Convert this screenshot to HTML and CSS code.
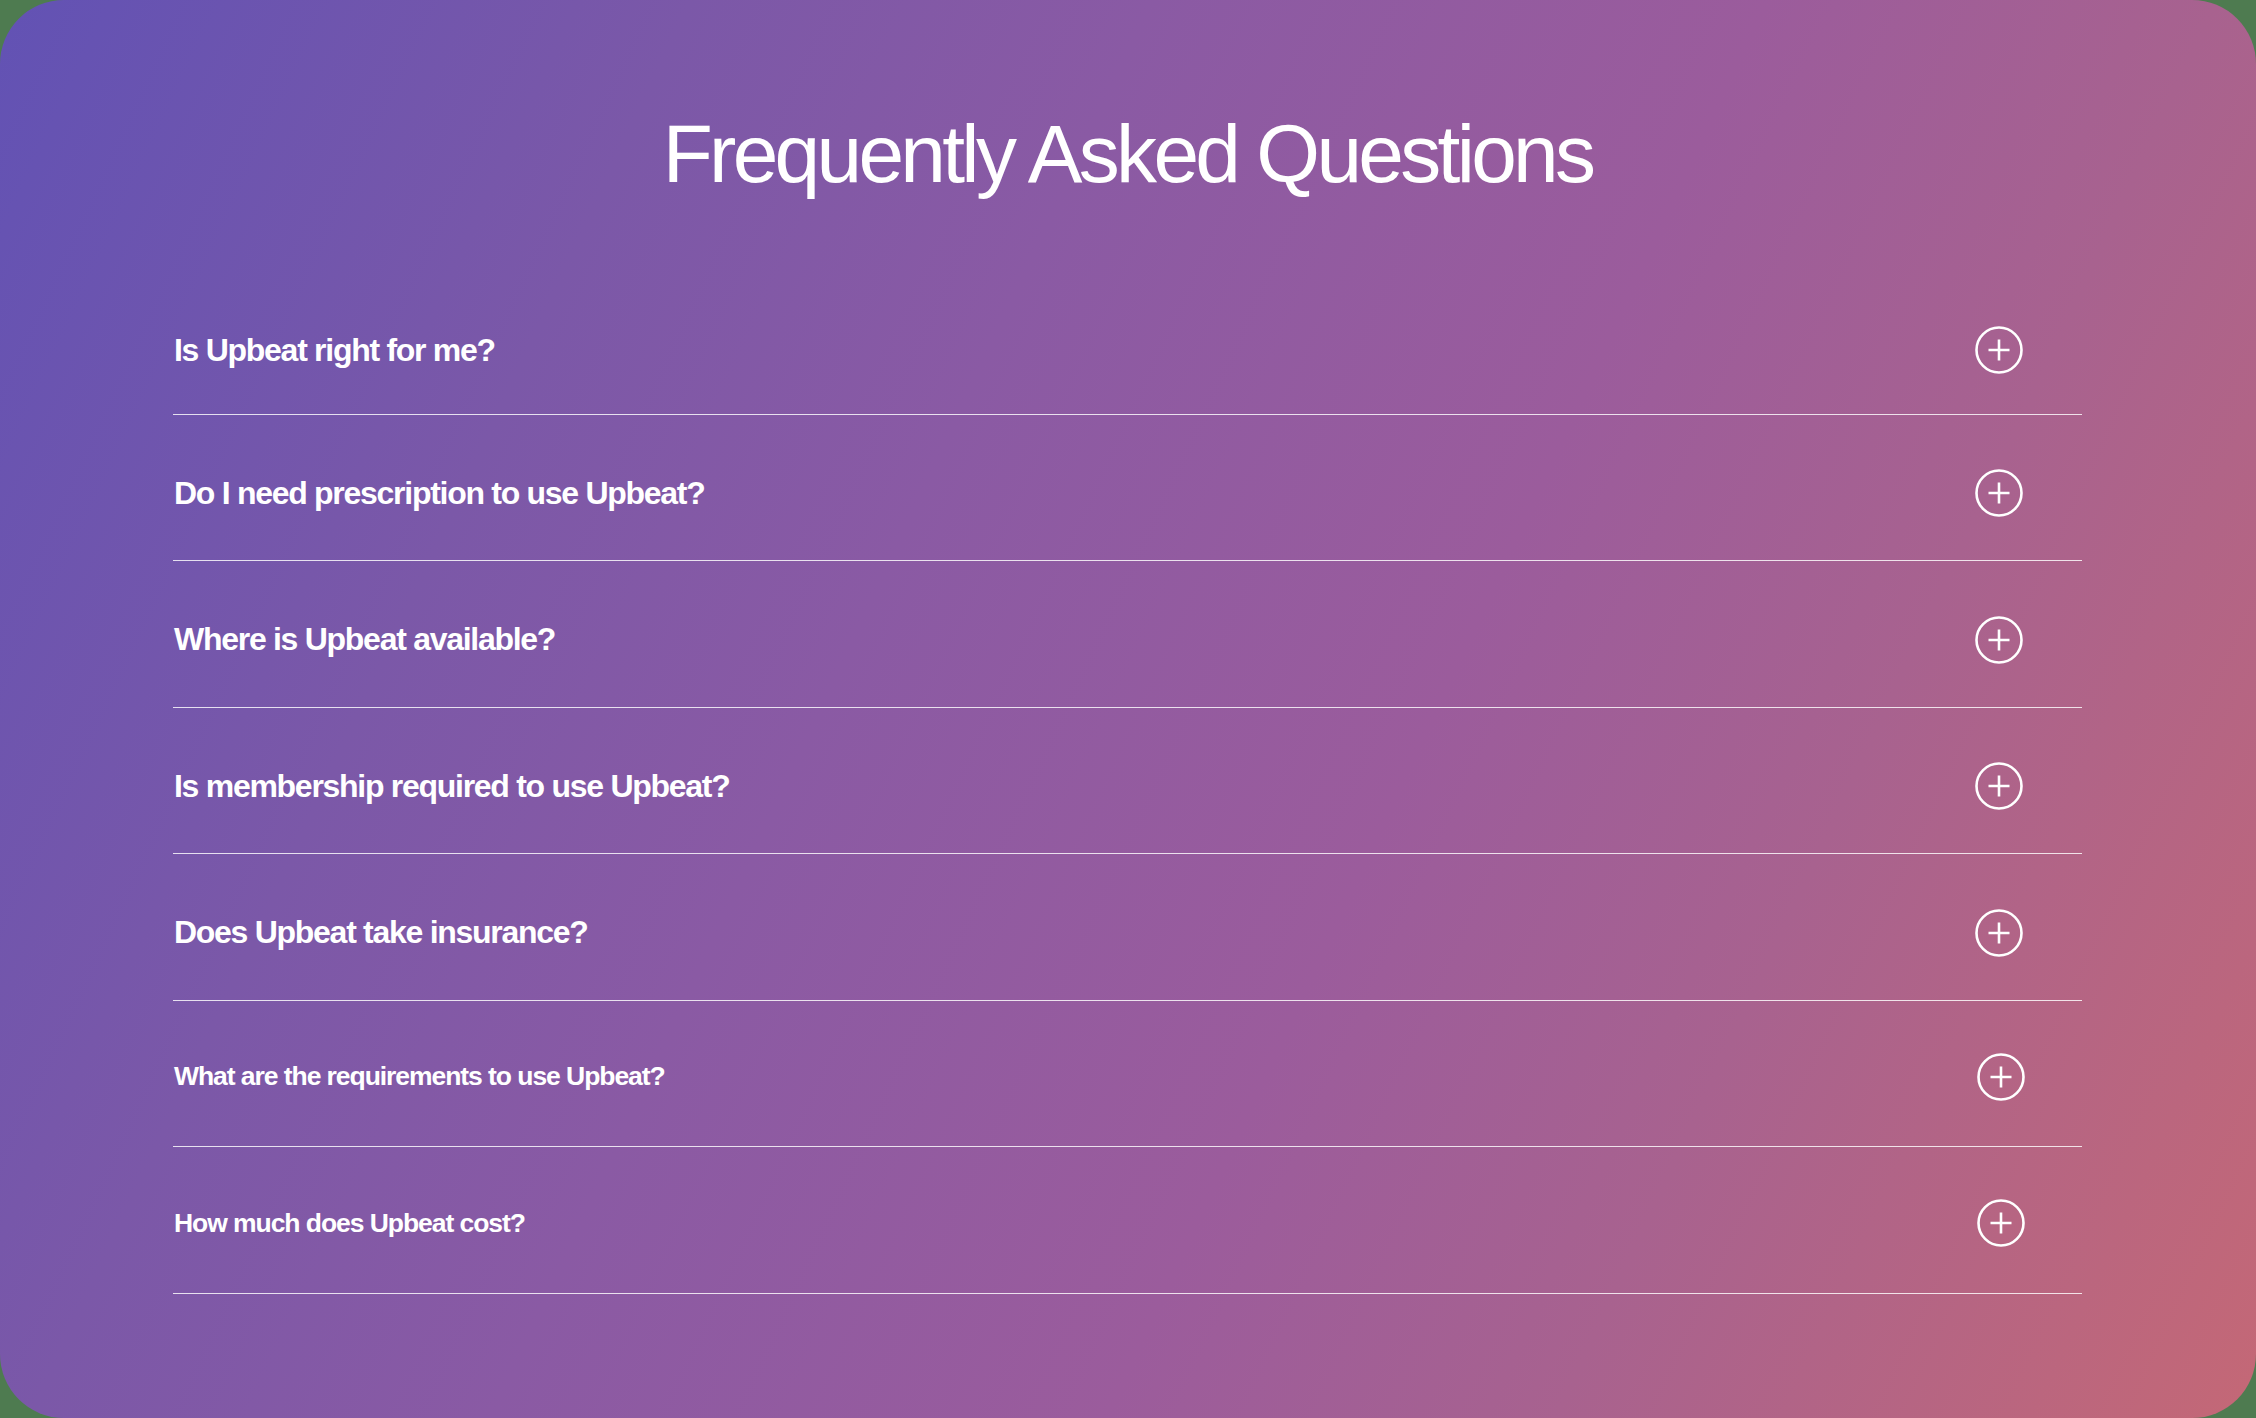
FILE: index.html
```html
<!DOCTYPE html>
<html lang="en">
<head>
<meta charset="utf-8">
<title>Frequently Asked Questions</title>
<link rel="stylesheet" href="styles.css">
</head>
<body>
<section class="faq">
  <h1 class="faq-title">Frequently Asked Questions</h1>
  <ul class="faq-list">
    <li class="faq-item faq-item--first"><span class="q q-lg">Is Upbeat right for me?</span><svg class="plus" viewBox="0 0 48 48"><circle cx="24" cy="24" r="22.5"/><path d="M24 13.5v21M13.5 24h21"/></svg></li>
    <li class="faq-item"><span class="q q-lg">Do I need prescription to use Upbeat?</span><svg class="plus" viewBox="0 0 48 48"><circle cx="24" cy="24" r="22.5"/><path d="M24 13.5v21M13.5 24h21"/></svg></li>
    <li class="faq-item"><span class="q q-lg">Where is Upbeat available?</span><svg class="plus" viewBox="0 0 48 48"><circle cx="24" cy="24" r="22.5"/><path d="M24 13.5v21M13.5 24h21"/></svg></li>
    <li class="faq-item"><span class="q q-lg">Is membership required to use Upbeat?</span><svg class="plus" viewBox="0 0 48 48"><circle cx="24" cy="24" r="22.5"/><path d="M24 13.5v21M13.5 24h21"/></svg></li>
    <li class="faq-item"><span class="q q-lg">Does Upbeat take insurance?</span><svg class="plus" viewBox="0 0 48 48"><circle cx="24" cy="24" r="22.5"/><path d="M24 13.5v21M13.5 24h21"/></svg></li>
    <li class="faq-item faq-item--sm"><span class="q q-sm">What are the requirements to use Upbeat?</span><svg class="plus" viewBox="0 0 48 48"><circle cx="24" cy="24" r="22.5"/><path d="M24 13.5v21M13.5 24h21"/></svg></li>
    <li class="faq-item faq-item--sm"><span class="q q-sm">How much does Upbeat cost?</span><svg class="plus" viewBox="0 0 48 48"><circle cx="24" cy="24" r="22.5"/><path d="M24 13.5v21M13.5 24h21"/></svg></li>
  </ul>
</section>
</body>
</html>
```
FILE: styles.css
```css
html, body {
  margin: 0;
  padding: 0;
  background: #4e7b50;
}
.faq {
  box-sizing: border-box;
  width: 100%;
  height: 1418px;
  border-radius: 64px;
  background: linear-gradient(115deg, #6252b4 0%, #7b58a8 23.7%, #8a5aa4 39.5%, #9b5c9c 60.6%, #a8628f 76%, #c46876 100%);
  padding: 113px 174px 0 173px;
  font-family: "Liberation Sans", Arial, sans-serif;
  color: #fff;
  overflow: hidden;
}
.faq-title {
  margin: 0;
  text-align: center;
  font-size: 82px;
  line-height: 82px;
  font-weight: 400;
  letter-spacing: -0.045em;
}
.faq-list {
  list-style: none;
  margin: 73px 0 0;
  padding: 0;
}
.faq-item {
  box-sizing: border-box;
  height: 146.5px;
  padding: 12px 59px 0 1px;
  display: flex;
  align-items: center;
  justify-content: space-between;
  border-bottom: 1px solid rgba(255, 255, 255, 0.82);
}
.faq-item--first {
  padding-top: 19px;
}
.faq-item--sm {
  padding-top: 7px;
  padding-right: 57px;
}
.q {
  font-weight: 700;
  letter-spacing: -0.04em;
}
.q-lg {
  font-size: 32px;
}
.q-sm {
  font-size: 26.5px;
}
.plus {
  width: 48px;
  height: 48px;
  flex: none;
  fill: none;
  stroke: #fff;
  stroke-width: 2.6;
  stroke-linecap: butt;
}
```
